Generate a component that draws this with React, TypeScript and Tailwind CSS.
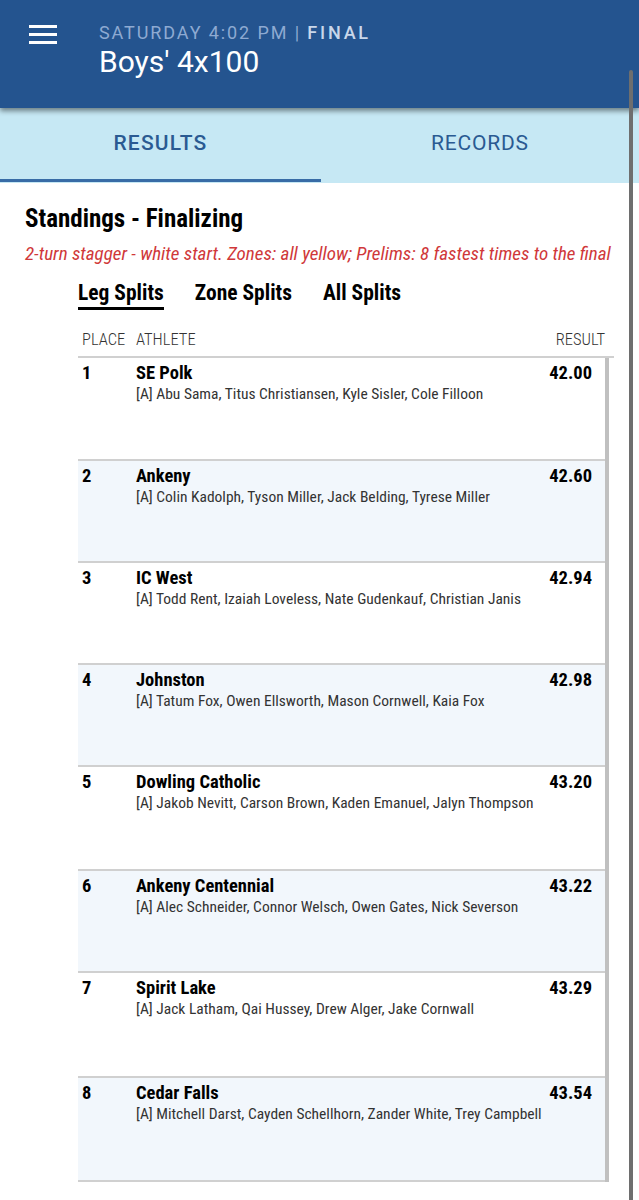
import React from "react";

const rows = [
  { place: 1, team: "SE Polk", athletes: "[A] Abu Sama, Titus Christiansen, Kyle Sisler, Cole Filloon", result: "42.00", h: "h-[103px]" },
  { place: 2, team: "Ankeny", athletes: "[A] Colin Kadolph, Tyson Miller, Jack Belding, Tyrese Miller", result: "42.60", h: "h-[102px]" },
  { place: 3, team: "IC West", athletes: "[A] Todd Rent, Izaiah Loveless, Nate Gudenkauf, Christian Janis", result: "42.94", h: "h-[102px]" },
  { place: 4, team: "Johnston", athletes: "[A] Tatum Fox, Owen Ellsworth, Mason Cornwell, Kaia Fox", result: "42.98", h: "h-[102px]" },
  { place: 5, team: "Dowling Catholic", athletes: "[A] Jakob Nevitt, Carson Brown, Kaden Emanuel, Jalyn Thompson", result: "43.20", h: "h-[104px]" },
  { place: 6, team: "Ankeny Centennial", athletes: "[A] Alec Schneider, Connor Welsch, Owen Gates, Nick Severson", result: "43.22", h: "h-[102px]" },
  { place: 7, team: "Spirit Lake", athletes: "[A] Jack Latham, Qai Hussey, Drew Alger, Jake Cornwall", result: "43.29", h: "h-[105px]" },
  { place: 8, team: "Cedar Falls", athletes: "[A] Mitchell Darst, Cayden Schellhorn, Zander White, Trey Campbell", result: "43.54", h: "h-[104px]" },
];

export default function App() {
  return (
    <div
      className="relative w-[639px] h-[1200px] overflow-hidden bg-white"
      style={{ fontFamily: '"Roboto Condensed", "Liberation Sans Narrow", "DejaVu Sans Condensed", Roboto, sans-serif' }}
    >
      {/* Header */}
      <div className="relative z-10 h-[108px] bg-[#24548f] shadow-[0_3px_5px_rgba(0,0,0,0.45)] flex items-start">
        <div className="w-[99px] pt-[25px] pl-[29px]">
          <div className="flex flex-col gap-[5px] w-[28px]">
            <div className="h-[3px] bg-white" />
            <div className="h-[3px] bg-white" />
            <div className="h-[3px] bg-white" />
          </div>
        </div>
        <div className="pt-[21px] flex flex-col" style={{ fontFamily: "Roboto, sans-serif" }}>
          <div className="text-[18px] leading-[23px] tracking-[1.9px] text-[#8eaad2] whitespace-nowrap">
            SATURDAY 4:02 PM | <span className="font-medium text-[#c9d7ea] tracking-[2.8px]">FINAL</span>
          </div>
          <div className="text-[30px] leading-[34px] text-white mt-[1px]">Boys' 4x100</div>
        </div>
      </div>

      {/* Tabs */}
      <div className="h-[77px] bg-[#c6e8f4] flex -mt-[2px] pt-[2px]" style={{ fontFamily: "Roboto, sans-serif" }}>
        <div className="w-[321px] flex flex-col">
          <div className="flex-1 flex items-center justify-center text-[21px] font-medium tracking-[1.2px] text-[#2a5a92]">RESULTS</div>
          <div className="h-[3px] bg-[#386ca6] mb-[1px]" />
        </div>
        <div className="flex-1 flex flex-col">
          <div className="flex-1 flex items-center justify-center text-[21px] tracking-[0.8px] text-[#2a5a92]">RECORDS</div>
          <div className="h-[4px]" />
        </div>
      </div>

      {/* Content */}
      <div className="pl-[25px] pt-[21px]">
        <div className="text-[25px] leading-[30px] font-bold text-black">Standings - Finalizing</div>
        <div className="text-[19px] leading-[24px] italic text-[#d0383a] mt-[8px] whitespace-nowrap">
          2-turn stagger - white start. Zones: all yellow; Prelims: 8 fastest times to the final
        </div>
      </div>

      <div className="ml-[78px] mt-[14px] flex gap-[31px] text-[21.5px] font-bold text-black">
        <div className="flex flex-col">
          <span className="leading-[26px]">Leg Splits</span>
          <div className="h-[3px] bg-black mt-[1px]" />
        </div>
        <span className="leading-[26px]">Zone Splits</span>
        <span className="leading-[26px]">All Splits</span>
      </div>

      {/* Table */}
      <div className="ml-[78px] w-[536px] mt-[22px]">
        <div className="flex items-end h-[26px] border-b-2 border-[#d0d0d0] text-[16.5px] font-light text-[#333] pb-[3px]">
          <div className="w-[58px] pl-[4px]">PLACE</div>
          <div className="flex-1">ATHLETE</div>
          <div className="pr-[9px]">RESULT</div>
        </div>
        <div className="w-[531px] border-r-4 border-[#c0c0c0]">
          {rows.map((r, i) => (
            <div
              key={r.place}
              className={`${r.h} flex items-start pt-[4px] border-b-2 border-[#d0d0d0] ${i % 2 === 1 ? "bg-[#f2f7fc]" : "bg-white"}`}
            >
              <div className="w-[58px] pl-[4px] text-[18.5px] font-bold text-black leading-[22px]">{r.place}</div>
              <div className="flex-1 flex flex-col">
                <div className="text-[18.5px] font-bold text-black leading-[22px]">{r.team}</div>
                <div className="text-[15.5px] text-[#333] leading-[20px] whitespace-nowrap">{r.athletes}</div>
              </div>
              <div className="pr-[13px] text-[18.5px] font-bold text-black leading-[22px]">{r.result}</div>
            </div>
          ))}
        </div>
      </div>

      {/* Scrollbar overlay */}
      <div className="absolute z-20 left-[629px] top-[70px] w-[4px] h-[1130px] bg-[#6e6e6e] rounded-t-full" />
    </div>
  );
}
